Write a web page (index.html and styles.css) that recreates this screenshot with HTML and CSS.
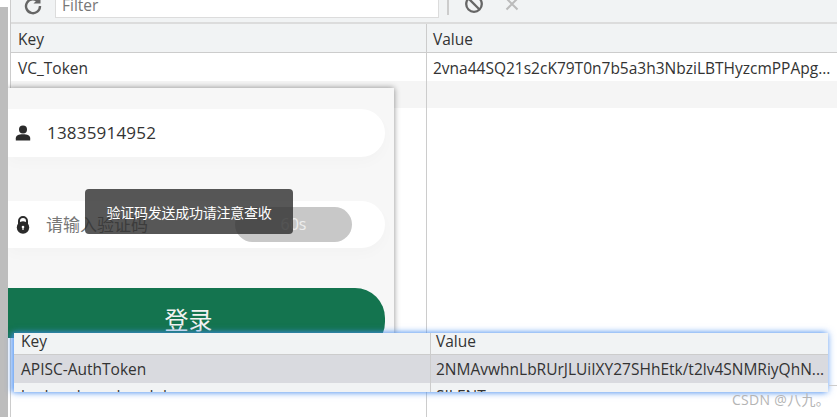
FILE: index.html
```html
<!DOCTYPE html>
<html lang="zh">
<head>
<meta charset="utf-8">
<title>Cookies</title>
<link rel="stylesheet" href="styles.css">
</head>
<body>
<div class="gutter"></div>
<main class="devtools">
  <div class="toolbar">
    <svg class="tool-reload" width="20" height="20" viewBox="0 0 20 20"><path d="M15.2 6.500A7 7 0 1 0 17 11" fill="none" stroke="#666" stroke-width="2.400"/><path d="M17.500 1.500v7h-7z" fill="#666"/></svg>
    <div class="filter">Filter</div>
    <span class="sep"></span>
    <svg class="tool-block" width="20" height="20" viewBox="0 0 20 20"><circle cx="10" cy="10" r="7.800" fill="none" stroke="#666" stroke-width="2.300"/><path d="M4.500 4.500l11 11" stroke="#666" stroke-width="2.300"/></svg>
    <svg class="tool-x" width="16" height="16" viewBox="0 0 16 16"><path d="M2.500 2.500l11 11M13.500 2.500l-11 11" stroke="#bbb" stroke-width="2"/></svg>
  </div>
  <div class="tbl">
    <div class="row head"><div class="key">Key</div><div class="val">Value</div></div>
    <div class="row"><div class="key">VC_Token</div><div class="val">2vna44SQ21s2cK79T0n7b5a3h3NbziLBTHyzcmPPApg...</div></div>
    <div class="row stripe"><div class="key"></div><div class="val"></div></div>
    <div class="row fill"><div class="key"></div><div class="val"></div></div>
  </div>
</main>

<section class="login">
  <div class="field first">
    <svg class="ficon" width="16" height="16" viewBox="0 0 16 16"><circle cx="8" cy="4.600" r="4" fill="#2b2b2b"/><path d="M.8 15.500v-2.200C.8 10.600 3.500 9.300 8 9.300s7.200 1.300 7.200 4v2.200z" fill="#2b2b2b"/></svg>
    <span class="ftext">13835914952</span>
  </div>
  <div class="field second">
    <svg class="ficon" width="16" height="18" viewBox="0 0 16 18"><path d="M4 8V5a4 4 0 0 1 8 0v3" fill="none" stroke="#2b2b2b" stroke-width="2"/><circle cx="8" cy="11.500" r="6.200" fill="#2b2b2b"/><circle cx="8" cy="11" r="1.300" fill="#fff"/><path d="M7.400 11h1.200v3H7.400z" fill="#fff"/></svg>
    <span class="ftext placeholder">请输入验证码</span>
    <span class="code">60s</span>
  </div>
  <button class="submit">登录</button>
</section>

<div class="toast">验证码发送成功请注意查收</div>

<section class="panel">
  <div class="row head"><div class="key">Key</div><div class="val">Value</div></div>
  <div class="row selected"><div class="key">APISC-AuthToken</div><div class="val">2NMAvwhnLbRUrJLUiIXY27SHhEtk/t2lv4SNMRiyQhN...</div></div>
  <div class="row cut"><div class="key">hadoopbasedmodule</div><div class="val">SILENT</div></div>
</section>

<div class="tail-line"></div>
<div class="mark">CSDN @八九。</div>
</body>
</html>
```
FILE: styles.css
```css
* { box-sizing: border-box; }
html, body { margin: 0; height: 100%; }
body {
  position: relative;
  width: 837px;
  height: 417px;
  overflow: hidden;
  background: #fff;
  font-family: "Open Sans", "Noto Sans CJK SC", sans-serif;
  font-size: 15.5px;
  color: #333;
}
.gutter {
  position: absolute;
  left: 0;
  top: 7px;
  bottom: 0;
  width: 8px;
  background: #bdbdbd;
}
.devtools {
  position: absolute;
  left: 10px;
  top: 0;
  right: 0;
  bottom: 0;
  border-left: 1px solid #ccc;
  display: flex;
  flex-direction: column;
}
.toolbar {
  height: 24px;
  flex: none;
  background: #f1f3f4;
  border-bottom: 2px solid #dcdcdc;
  display: flex;
  align-items: flex-start;
  position: relative;
}
.tool-reload { margin: -5px 0 0 12px; }
.filter {
  margin-left: 12px;
  width: 384px;
  height: 18px;
  background: #fff;
  border: 1px solid #dcdcdc;
  border-top: 0;
  padding-left: 6px;
  color: #777;
  line-height: 11px;
  font-size: 15.5px;
}
.sep { width: 2px; height: 15px; margin-left: 8px; background: #ccc; }
.tool-block { margin: -6px 0 0 15px; }
.tool-x { margin: -4px 0 0 20px; }
.tbl { flex: 1; display: flex; flex-direction: column; }
.row { display: flex; height: 28px; flex: none; line-height: 29px; }
.key { width: 415px; flex: none; padding-left: 7px; white-space: nowrap; overflow: hidden; }
.val { flex: 1; min-width: 0; padding-left: 6px; border-left: 1px solid #ccc; white-space: nowrap; overflow: hidden; }
.tbl .key, .tbl .val { padding-top: 1px; }
.tbl .head { height: 29px; background: #f1f3f4; border-bottom: 1px solid #ccc; }
.stripe { height: 27px; background: #f5f5f5; }
.tbl .fill { flex: 1; }

.login {
  position: absolute;
  left: 8px;
  top: 88px;
  width: 386px;
  height: 250px;
  background: #f7f7f7;
  box-shadow: 0 0 6px rgba(0, 0, 0, .45);
  clip-path: inset(-8px -8px 0 0);
  padding-top: 21px;
}
.field {
  width: 377px;
  height: 48px;
  background: #fff;
  border-radius: 0 24px 24px 0;
  box-shadow: 0 6px 14px rgba(0, 0, 0, .02);
  display: flex;
  align-items: center;
  padding-left: 7px;
  font-size: 17px;
  position: relative;
}
.first .ftext { position: relative; top: -1px; letter-spacing: .2px; }
.second { margin-top: 44px; height: 47px; }
.second .ftext { margin-left: 15px; position: relative; top: -1px; }
.ftext { margin-left: 16px; }
.placeholder { color: #777; }
.code {
  position: absolute;
  left: 227px;
  top: 6px;
  width: 117px;
  height: 35px;
  border-radius: 18px;
  background: #c8c8c8;
  color: #eee;
  text-align: center;
  line-height: 35px;
  font-size: 16px;
}
.submit {
  display: block;
  width: 377px;
  height: 64px;
  margin-top: 40px;
  border: 0;
  border-radius: 0 30px 30px 0;
  background: #14744f;
  color: #f2f2f2;
  font: 24px/62px "Noto Sans CJK SC", sans-serif;
  padding: 0 16px 2px 0;
}
.toast {
  position: absolute;
  left: 85px;
  top: 189px;
  width: 208px;
  height: 45px;
  padding-top: 14px;
  border-radius: 4px;
  background: rgba(45, 45, 45, .8);
  color: #fff;
  text-align: center;
  font: 14px/18px "Noto Sans CJK SC", sans-serif;
  letter-spacing: -.25px;
}
.panel {
  position: absolute;
  left: 14px;
  top: 333px;
  width: 814px;
  height: 59px;
  overflow: hidden;
  background: #f1f3f4;
  box-shadow: -3px 0 5px rgba(70, 140, 240, .6), 0 0 7px rgba(70, 140, 240, .75);
}
.panel .row { line-height: 27px; }
.panel .head { height: 22px; line-height: 17px; background: #f1f3f4; border-bottom: 1px solid #ccc; }
.panel .key { width: 416px; padding-left: 7px; }
.panel .val { padding-left: 5px; }
.panel .selected { height: 28px; background: #d9dadf; line-height: 29px; }
.panel .cut { height: 9px; line-height: 27px; }
.tail-line {
  position: absolute;
  left: 829px;
  top: 385px;
  width: 8px;
  height: 1px;
  background: #ccc;
}
.mark {
  position: absolute;
  left: 732px;
  top: 391px;
  color: #b4b4b4;
  font: 14px/18px "Open Sans", "Noto Sans CJK SC", sans-serif;
  letter-spacing: .3px;
}
```
